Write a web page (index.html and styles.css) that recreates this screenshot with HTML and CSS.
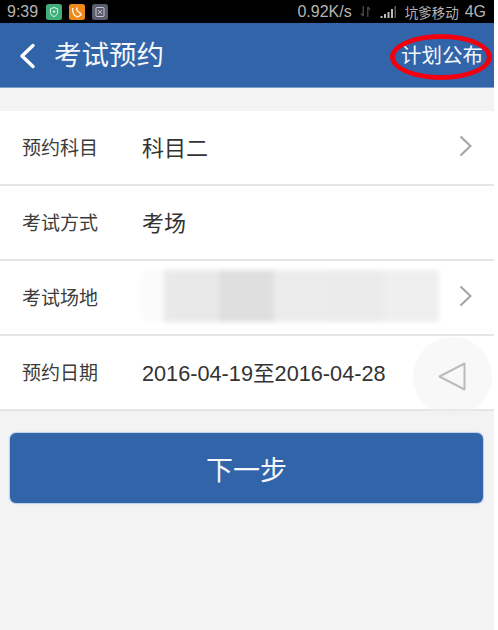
FILE: index.html
```html
<!DOCTYPE html>
<html lang="zh-CN">
<head>
<meta charset="utf-8">
<title>考试预约</title>
<link rel="stylesheet" href="styles.css">
</head>
<body>
<div class="screen">
  <div class="status">
    <div class="status-left">
      <span class="time">9:39</span>
      <svg class="app" viewBox="0 0 16 16"><rect width="16" height="16" rx="2.5" fill="#3fae78"/><path d="M8 3.5l3.6 1.3v3.4c0 2.2-1.6 3.6-3.6 4.3-2-.7-3.6-2.1-3.6-4.3V4.800z" fill="none" stroke="#e4f5ec" stroke-width="1"/><circle cx="8" cy="7.600" r="1.200" fill="#e4f5ec"/></svg>
      <svg class="app" viewBox="0 0 16 16"><rect width="16" height="16" rx="2.500" fill="#ee8a1c"/><path d="M3.500 4c0 4 .8 7.500 4 8.500 1.500.4 3-.2 3.500-1.500M8 3.500c-.6 2 0 3.500 1.500 4.300 1.500.8 3 2 2.500 4" fill="none" stroke="#fff3dd" stroke-width="1.400"/></svg>
      <svg class="app" viewBox="0 0 16 16"><rect width="16" height="16" rx="2.500" fill="#5a5d6e"/><rect x="4" y="3.500" width="8" height="9" rx="1" fill="none" stroke="#c9cad2" stroke-width="1"/><path d="M6 6l4 4M10 6l-4 4" stroke="#c9cad2" stroke-width=".9"/></svg>
    </div>
    <div class="status-right">
      <span>0.92K/s</span>
      <svg class="arrows" viewBox="0 0 12 14"><path d="M3.500 1v11M3.500 12L1 9M8.500 13V2M8.500 2L11 5" fill="none" stroke="#4f4f4f" stroke-width="1.400"/></svg>
      <svg class="signal" viewBox="0 0 16 12"><path d="M0 10h2v2H0zM3.500 8h2v4h-2zM7 6h2v6H7zM10.500 3h2v9h-2z" fill="#bdbdbd"/><path d="M14 0h1.500v12H14z" fill="#5a5a5a"/></svg>
      <span class="carrier">坑爹移动</span>
      <span>4G</span>
    </div>
  </div>
  <header class="bar">
    <div class="bar-left">
      <svg class="back" viewBox="0 0 18 26"><path d="M15 2.500L4 13l11 10.500" fill="none" stroke="#fff" stroke-width="3.400" stroke-linecap="round" stroke-linejoin="round"/></svg>
      <h1 class="title">考试预约</h1>
    </div>
    <span class="plan">计划公布</span>
    <span class="circled"></span>
  </header>
  <section class="list">
    <div class="row">
      <span class="label">预约科目</span>
      <span class="value">科目二</span>
      <svg class="chev" viewBox="0 0 13 22"><path d="M1.500 1.500l10 9.500-10 9.500" fill="none" stroke="#a6a6a6" stroke-width="2.200"/></svg>
    </div>
    <div class="row">
      <span class="label">考试方式</span>
      <span class="value">考场</span>
    </div>
    <div class="row">
      <span class="label">考试场地</span>
      <div class="mosaic">
        <i class="m m1"></i><i class="m m2"></i><i class="m m3"></i><i class="m m4"></i><i class="m m5"></i><i class="m m6"></i>
      </div>
      <svg class="chev" viewBox="0 0 13 22"><path d="M1.500 1.500l10 9.500-10 9.500" fill="none" stroke="#a6a6a6" stroke-width="2.200"/></svg>
    </div>
    <div class="row">
      <span class="label">预约日期</span>
      <span class="value date">2016-04-19至2016-04-28</span>
    </div>
  </section>
  <button class="next">下一步</button>
  <div class="float">
    <svg class="float-icon" viewBox="0 0 30 32"><path d="M27.500 2.500v26L2.500 15.500z" fill="none" stroke="#bcbcbc" stroke-width="2" stroke-linejoin="round"/></svg>
  </div>
</div>
</body>
</html>
```
FILE: styles.css
```css
* { box-sizing: border-box; }
html, body { margin: 0; padding: 0; background: #fff; }
body { font-family: "Liberation Sans", "Noto Sans CJK SC", sans-serif; }
.screen { position: relative; width: 494px; height: 630px; background: #f3f3f3; overflow: hidden; }

.status { height: 23px; background: #000; color: #b4b4b4; display: flex; align-items: center; justify-content: space-between; padding: 0 8px 0 7px; font-size: 16px; }
.status-left { display: flex; align-items: center; }
.time { font-size: 16px; margin-right: 8px; }
.app { width: 16px; height: 16px; margin-right: 7px; }
.status-right { display: flex; align-items: center; }
.arrows { width: 11px; height: 13px; margin-left: 8px; }
.signal { width: 17px; height: 12px; margin-left: 9px; }
.carrier { font-size: 13.500px; margin-left: 8px; margin-right: 6px; }

.bar { position: relative; height: 65px; background: #3164a8; border-bottom: 1px solid #7f9fca; display: flex; align-items: center; justify-content: space-between; padding: 2px 11px 0 18px; color: #f4f7fb; }
.bar-left { display: flex; align-items: center; }
.back { width: 18px; height: 26px; margin-right: 18px; }
.title { margin: 0; font-size: 27.500px; font-weight: 400; line-height: 1; }
.plan { font-size: 20.500px; line-height: 1; }
.circled { position: absolute; left: 390px; top: 11px; width: 102px; height: 46px; border: 5px solid #f20010; border-radius: 50%; }

.list { margin-top: 23px; background: #fff; }
.row { height: 75px; display: flex; align-items: center; padding: 0 22px 3px; border-bottom: 2px solid #e6e6e6; }
.label { width: 120px; flex: none; font-size: 19px; color: #3c3c3c; }
.value { font-size: 22px; color: #333; flex: 1; }
.date { font-size: 21.700px; }
.chev { width: 13px; height: 22px; margin-left: auto; margin-right: 0; }

.mosaic { display: flex; height: 52px; width: 300px; flex: none; margin-left: -3px; filter: blur(2.500px); }
.m { display: block; height: 100%; }
.m1 { width: 25px; background: #fbfbfb; border-radius: 14px 0 0 14px; }
.m2 { width: 55px; background: #e9e9e9; }
.m3 { width: 55px; background: #dfdfdf; }
.m4 { width: 55px; background: #ececec; }
.m5 { width: 55px; background: #ebebeb; }
.m6 { width: 55px; background: #efefef; }

.next { display: block; width: 473px; height: 70px; margin: 22px 0 0 10px; padding: 0; background: #3164a8; border: 0; border-radius: 6px; box-shadow: 0 0 1px 1px #b9d0e8; color: #f4f7fb; font: 400 27px "Liberation Sans", "Noto Sans CJK SC", sans-serif; }

.float { position: absolute; left: 413px; top: 337px; width: 79px; height: 79px; border-radius: 50%; background: rgba(238, 238, 238, .4); display: flex; align-items: center; justify-content: center; }
.float-icon { width: 30px; height: 32px; margin-right: 1px; }
```
